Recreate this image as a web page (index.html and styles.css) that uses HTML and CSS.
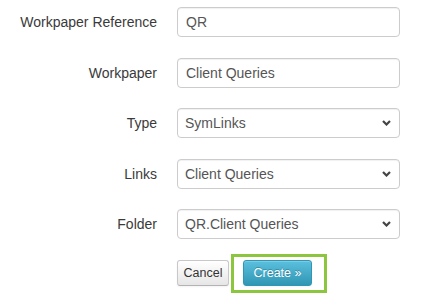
FILE: index.html
```html
<!DOCTYPE html>
<html>
<head>
	<title>Create Workpaper</title>
	<meta charset="utf-8">
	<link rel="stylesheet" href="styles.css">
</head>
<body>
<form class="wp-form">
	<div class="row">
		<label class="lbl">Workpaper Reference</label>
		<input class="field" type="text" value="QR">
	</div>
	<div class="row">
		<label class="lbl">Workpaper</label>
		<input class="field" type="text" value="Client Queries">
	</div>
	<div class="row">
		<label class="lbl">Type</label>
		<div class="sel">
			<select class="field"><option>SymLinks</option></select>
			<svg class="chev" width="9" height="6" viewBox="0 0 9 6"><path d="M1 1 L4.5 4.5 L8 1" fill="none" stroke="#444" stroke-width="2.2"/></svg>
		</div>
	</div>
	<div class="row">
		<label class="lbl">Links</label>
		<div class="sel">
			<select class="field"><option>Client Queries</option></select>
			<svg class="chev" width="9" height="6" viewBox="0 0 9 6"><path d="M1 1 L4.5 4.5 L8 1" fill="none" stroke="#444" stroke-width="2.2"/></svg>
		</div>
	</div>
	<div class="row">
		<label class="lbl">Folder</label>
		<div class="sel">
			<select class="field"><option>QR.Client Queries</option></select>
			<svg class="chev" width="9" height="6" viewBox="0 0 9 6"><path d="M1 1 L4.5 4.5 L8 1" fill="none" stroke="#444" stroke-width="2.2"/></svg>
		</div>
	</div>
	<div class="row">
		<span></span>
		<div class="actions">
			<button class="btn btn-cancel" type="button">Cancel</button>
			<span class="focus"><button class="btn btn-info" type="button">Create &raquo;</button></span>
		</div>
	</div>
</form>
</body>
</html>
```
FILE: styles.css
```css
*{
	margin: 0;
	padding: 0;
	box-sizing: border-box;
}
html, body{
	height: 100%;
}
body{
	font-family: "Liberation Sans", Arial, sans-serif;
	font-size: 14px;
	color: #333;
	background: #fff;
}
.wp-form{
	display: flex;
	flex-direction: column;
	gap: 20.5px;
	padding-top: 7px;
	padding-bottom: 14px;
}
.row{
	display: grid;
	grid-template-columns: 157px 223px;
	column-gap: 20px;
	align-items: center;
}
.lbl{
	text-align: right;
	color: #3a3a3a;
}
.field{
	width: 223px;
	height: 30px;
	border: 1px solid #ccc;
	border-radius: 4px;
	padding: 0 8px;
	font-family: inherit;
	font-size: 14px;
	color: #555;
	background: #fff;
	box-shadow: inset 0 1px 1px rgba(0,0,0,0.06);
	outline: none;
}
select.field{
	appearance: none;
	-webkit-appearance: none;
	padding-left: 7px;
}
.sel{
	position: relative;
	width: 223px;
}
.chev{
	position: absolute;
	right: 9px;
	top: 12px;
	pointer-events: none;
}
.actions{
	display: flex;
	align-items: flex-start;
	gap: 14px;
	margin-top: 0.5px;
}
.btn{
	height: 26px;
	padding: 0;
	font-family: inherit;
	font-size: 12.5px;
	color: #333;
	border: 1px solid #c8c8c8;
	border-bottom-color: #b3b3b3;
	border-radius: 3px;
	background: linear-gradient(#ffffff, #e6e6e6);
	box-shadow: inset 0 1px 0 rgba(255,255,255,0.2), 0 1px 2px rgba(0,0,0,0.05);
}
.btn-cancel{
	width: 52px;
}
.btn-info{
	width: 69px;
	color: #fff;
	border-color: #2f96b4;
	background: linear-gradient(#5bc0de, #2f96b4);
	text-shadow: 0 -1px 0 rgba(0,0,0,0.25);
}
.focus{
	position: relative;
	display: block;
	height: 26px;
}
.focus::after{
	content: "";
	position: absolute;
	top: -6px;
	bottom: -7px;
	left: -12px;
	right: -15px;
	border: 3px solid #8cc63f;
	pointer-events: none;
}
```
